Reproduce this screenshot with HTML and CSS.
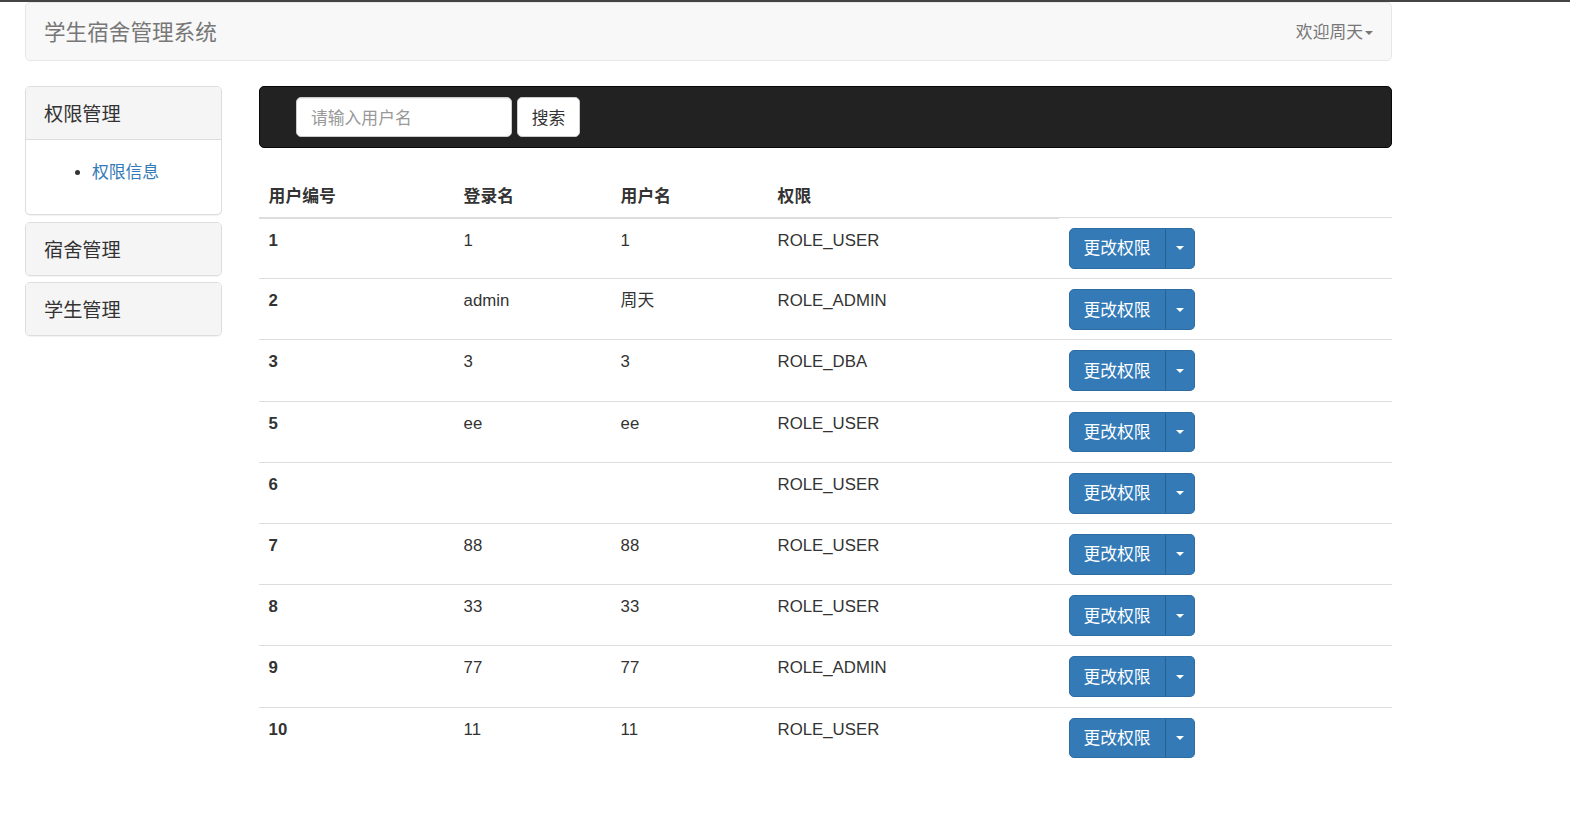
FILE: index.html
```html
<!DOCTYPE html>
<html lang="zh-CN">
<head>
<meta charset="utf-8">
<title>学生宿舍管理系统</title>
<link rel="stylesheet" href="styles.css">
</head>
<body>
<div class="topline"></div>
<div class="page">
  <nav class="navbar">
    <span class="brand">学生宿舍管理系统</span>
    <span class="user">欢迎周天<span class="caret"></span></span>
  </nav>
  <div class="layout">
    <aside class="sidebar">
      <div class="panel">
        <div class="panel-heading">权限管理</div>
        <div class="panel-body">
          <ul class="menu">
            <li><a href="#">权限信息</a></li>
          </ul>
        </div>
      </div>
      <div class="panel">
        <div class="panel-heading">宿舍管理</div>
      </div>
      <div class="panel">
        <div class="panel-heading">学生管理</div>
      </div>
    </aside>
    <main class="main">
      <div class="searchbar">
        <input class="search-input" type="text" placeholder="请输入用户名">
        <button class="btn-default" type="button">搜索</button>
      </div>
      <table class="table">
        <colgroup>
          <col class="c1"><col class="c2"><col class="c3"><col class="c4"><col class="c5">
        </colgroup>
        <thead>
          <tr><th>用户编号</th><th>登录名</th><th>用户名</th><th>权限</th></tr>
        </thead>
        <tbody>
          <tr><td class="id">1</td><td>1</td><td>1</td><td>ROLE_USER</td><td><div class="btn-group"><button class="btn-main">更改权限</button><button class="btn-toggle"><span class="caret"></span></button></div></td></tr>
          <tr><td class="id">2</td><td>admin</td><td>周天</td><td>ROLE_ADMIN</td><td><div class="btn-group"><button class="btn-main">更改权限</button><button class="btn-toggle"><span class="caret"></span></button></div></td></tr>
          <tr><td class="id">3</td><td>3</td><td>3</td><td>ROLE_DBA</td><td><div class="btn-group"><button class="btn-main">更改权限</button><button class="btn-toggle"><span class="caret"></span></button></div></td></tr>
          <tr><td class="id">5</td><td>ee</td><td>ee</td><td>ROLE_USER</td><td><div class="btn-group"><button class="btn-main">更改权限</button><button class="btn-toggle"><span class="caret"></span></button></div></td></tr>
          <tr><td class="id">6</td><td></td><td></td><td>ROLE_USER</td><td><div class="btn-group"><button class="btn-main">更改权限</button><button class="btn-toggle"><span class="caret"></span></button></div></td></tr>
          <tr><td class="id">7</td><td>88</td><td>88</td><td>ROLE_USER</td><td><div class="btn-group"><button class="btn-main">更改权限</button><button class="btn-toggle"><span class="caret"></span></button></div></td></tr>
          <tr><td class="id">8</td><td>33</td><td>33</td><td>ROLE_USER</td><td><div class="btn-group"><button class="btn-main">更改权限</button><button class="btn-toggle"><span class="caret"></span></button></div></td></tr>
          <tr><td class="id">9</td><td>77</td><td>77</td><td>ROLE_ADMIN</td><td><div class="btn-group"><button class="btn-main">更改权限</button><button class="btn-toggle"><span class="caret"></span></button></div></td></tr>
          <tr><td class="id">10</td><td>11</td><td>11</td><td>ROLE_USER</td><td><div class="btn-group"><button class="btn-main">更改权限</button><button class="btn-toggle"><span class="caret"></span></button></div></td></tr>
        </tbody>
      </table>
    </main>
  </div>
</div>
</body>
</html>
```
FILE: styles.css
```css
* { box-sizing: border-box; }
html, body { margin: 0; padding: 0; background: #fff; }
body {
  font-family: "Liberation Sans", "Noto Sans CJK SC", sans-serif;
  font-size: 16.8px;
  line-height: 24px;
  color: #333;
}
.topline { height: 2px; background: #444; }
.page { width: 1392px; padding-left: 25px; }

.navbar {
  height: 59px;
  background: #f8f8f8;
  border: 1px solid #e7e7e7;
  border-radius: 5px;
  display: flex;
  align-items: center;
  justify-content: space-between;
  padding: 2px 18px 0;
}
.brand { font-size: 21.6px; color: #777; line-height: 24px; }
.user { color: #777; font-size: 16.8px; display: flex; align-items: center; }
.caret {
  display: inline-block;
  width: 0; height: 0;
  border-top: 4.8px solid;
  border-left: 4.8px solid transparent;
  border-right: 4.8px solid transparent;
  margin-left: 2px;
}

.layout { display: flex; margin-top: 25px; gap: 37px; align-items: flex-start; }
.sidebar { width: 197px; flex: none; display: flex; flex-direction: column; gap: 6.5px; }
.panel {
  border: 1px solid #ddd;
  border-radius: 5px;
  background: #fff;
  box-shadow: 0 1px 1px rgba(0,0,0,.05);
  overflow: hidden;
}
.panel-heading {
  background: #f5f5f5;
  height: 52px;
  padding: 4px 18px 0;
  display: flex;
  align-items: center;
  font-size: 19.2px;
  color: #333;
}
.panel-body { border-top: 1px solid #ddd; padding: 21px 18px 17px; }
.menu { margin: 0 0 12px; padding-left: 48px; }
.menu li { line-height: 24px; }
.menu a { color: #337ab7; text-decoration: none; }

.main { width: 1133px; flex: none; }
.searchbar {
  height: 62px;
  background: #222;
  border: 1px solid #080808;
  border-radius: 5px;
  padding: 10px 36px;
  display: flex;
  gap: 5px;
}
.search-input {
  width: 216px;
  height: 40px;
  border: 1px solid #ccc;
  border-radius: 5px;
  padding: 3px 14px 0;
  font: inherit;
  color: #555;
  background: #fff;
  box-shadow: inset 0 1px 1px rgba(0,0,0,.075);
  outline: none;
}
.search-input::placeholder { color: #999; }
.btn-default {
  width: 63px;
  height: 40px;
  border: 1px solid #ccc;
  border-radius: 5px;
  background: #fff;
  color: #333;
  font: inherit;
  padding: 3px 0 0;
}

.table {
  width: 1133px;
  margin-top: 25px;
  border-collapse: collapse;
  table-layout: fixed;
}
.c1 { width: 195px; } .c2 { width: 157px; } .c3 { width: 157px; } .c4 { width: 291px; } .c5 { width: 333px; }
.table th {
  text-align: left;
  font-weight: bold;
  padding: 12px 9.6px 7.6px;
  border-bottom: 2px solid #ddd;
  vertical-align: bottom;
}
.table td {
  padding: 10px 9.6px 9.4px;
  border-top: 1px solid #ddd;
  vertical-align: top;
  height: 61.2px;
}
.table td.id { font-weight: bold; }

.btn-group { display: inline-flex; }
.btn-main, .btn-toggle {
  height: 40.8px;
  background: #337ab7;
  border: 1px solid #2e6da4;
  color: #fff;
  font: inherit;
  padding: 0;
}
.btn-main { width: 97px; border-radius: 5px 0 0 5px; padding-top: 2px; }
.btn-toggle {
  width: 30px;
  border-left: 1px solid #286090;
  border-radius: 0 5px 5px 0;
  margin-left: -1px;
  display: flex; align-items: center; justify-content: center;
}
.btn-toggle .caret { margin-left: 0; color: #fff; }
```
